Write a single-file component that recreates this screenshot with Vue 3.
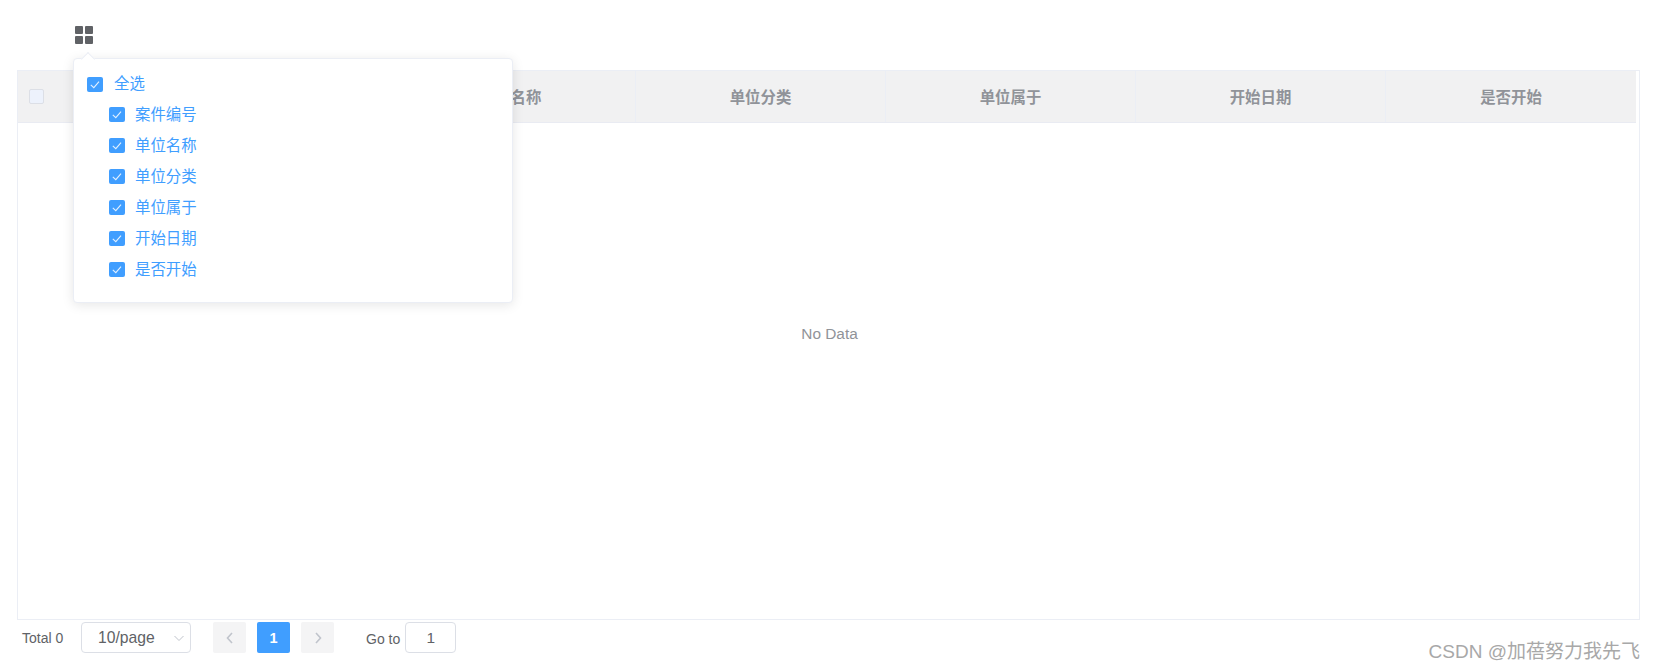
<template>
  <div class="page">
    <div class="toolbar">
      <button class="grid-btn" type="button" aria-label="columns">
        <svg width="18" height="18" viewBox="0 0 18 18">
          <rect x="0" y="0" width="8" height="8" rx="1" />
          <rect x="10" y="0" width="8" height="8" rx="1" />
          <rect x="0" y="10" width="8" height="8" rx="1" />
          <rect x="10" y="10" width="8" height="8" rx="1" />
        </svg>
      </button>
      <div class="popover">
        <span class="popover__arrow"></span>
        <label class="check check--all">
          <span class="check__box">
            <svg width="16" height="15" viewBox="0 0 16 15"><path d="M3.8 7.8 6.8 10.6 12 4.6" /></svg>
          </span>
          <span class="check__label check__label--all">全选</span>
        </label>
        <label v-for="col in columns" :key="col" class="check check--item">
          <span class="check__box">
            <svg width="16" height="15" viewBox="0 0 16 15"><path d="M3.8 7.8 6.8 10.6 12 4.6" /></svg>
          </span>
          <span class="check__label">{{ col }}</span>
        </label>
      </div>
    </div>

    <div class="table">
      <div class="table__head">
        <div class="table__cell table__cell--select">
          <span class="head-check"></span>
        </div>
        <div v-for="col in columns" :key="col" class="table__cell">{{ col }}</div>
      </div>
      <div class="table__empty">No Data</div>
    </div>

    <div class="pager">
      <span class="pager__total">Total 0</span>
      <div class="pager__size">
        <span>10/page</span>
        <svg width="12" height="12" viewBox="0 0 12 12"><path d="M1.5 4 6 8.5 10.5 4" /></svg>
      </div>
      <button class="pager__btn" type="button" aria-label="prev">
        <svg width="12" height="12" viewBox="0 0 12 12"><path d="M8 1 3.5 6 8 11" /></svg>
      </button>
      <button class="pager__btn pager__btn--active" type="button">1</button>
      <button class="pager__btn" type="button" aria-label="next">
        <svg width="12" height="12" viewBox="0 0 12 12"><path d="M4 1 8.5 6 4 11" /></svg>
      </button>
      <span class="pager__goto">Go to</span>
      <div class="pager__input">1</div>
    </div>

    <div class="watermark">CSDN @加蓓努力我先飞</div>
  </div>
</template>

<script setup>
const columns = ["案件编号", "单位名称", "单位分类", "单位属于", "开始日期", "是否开始"];
</script>

<style>
html,
body {
  margin: 0;
  background: #fff;
}
</style>

<style scoped>
.page {
  position: relative;
  height: 670px;
  box-sizing: border-box;
  padding: 0 16px 0 17px;
  font-family: "Liberation Sans", "Noto Sans CJK SC", sans-serif;
  overflow: hidden;
}
.toolbar {
  position: relative;
  height: 70px;
}
.grid-btn {
  display: block;
  margin: 0;
  padding: 26px 0 0 58px;
  border: 0;
  background: none;
}
.grid-btn svg {
  display: block;
  fill: #606266;
}
.popover {
  position: absolute;
  z-index: 2;
  left: 56px;
  top: 58px;
  width: 440px;
  height: 245px;
  box-sizing: border-box;
  padding: 2px 13px;
  background: #fff;
  border: 1px solid #ebeef5;
  border-radius: 4px;
  box-shadow: 0 2px 12px rgba(0, 0, 0, 0.1);
}
.popover__arrow {
  position: absolute;
  left: 9px;
  top: -5px;
  width: 9px;
  height: 9px;
  background: #fff;
  border-left: 1px solid #ebeef5;
  border-top: 1px solid #ebeef5;
  transform: rotate(45deg);
}
.check {
  display: flex;
  align-items: center;
  height: 31px;
}
.check--all {
  margin-top: 8px;
  height: 30px;
}
.check--item {
  padding-left: 22px;
}
.check__box {
  width: 16px;
  height: 15px;
  border-radius: 2px;
  background: #409eff;
  flex: none;
}
.check__box svg {
  display: block;
  fill: none;
  stroke: rgba(255, 255, 255, 0.85);
  stroke-width: 1.1;
}
.check__label {
  margin-left: 10px;
  font-size: 15.4px;
  line-height: 1;
  color: #409eff;
}
.check__label--all {
  margin-left: 11px;
}
.table {
  height: 550px;
  box-sizing: border-box;
  display: flex;
  flex-direction: column;
  border: 1px solid #ebeef5;
  padding-right: 3px;
}
.table__head {
  display: grid;
  grid-template-columns: 118px repeat(6, 1fr);
  height: 52px;
  background: #f1f1f2;
  border-bottom: 1px solid #e9ebf2;
  box-sizing: border-box;
}
.table__cell {
  display: flex;
  align-items: center;
  justify-content: center;
  padding-bottom: 2px;
  font-size: 15.4px;
  font-weight: 700;
  color: #909399;
  border-right: 1px solid #ebeef5;
}
.table__cell:last-child {
  border-right: 0;
}
.table__cell--select {
  justify-content: flex-start;
  padding-left: 11px;
  padding-bottom: 0;
}
.head-check {
  width: 15px;
  height: 15px;
  box-sizing: border-box;
  border: 1px solid #dcdfe6;
  border-radius: 2px;
  background: #edf2fc;
}
.table__empty {
  flex: 1;
  display: flex;
  align-items: center;
  justify-content: center;
  margin-right: -5px;
  padding-bottom: 75px;
  font-size: 15.4px;
  color: #909399;
}
.pager {
  display: flex;
  align-items: center;
  height: 31px;
  margin-top: 2px;
  padding-left: 5px;
  color: #606266;
}
.pager__total {
  width: 59px;
  font-size: 14px;
}
.pager__size {
  display: flex;
  align-items: center;
  justify-content: space-between;
  width: 110px;
  height: 31px;
  box-sizing: border-box;
  padding: 0 5px 0 16px;
  margin-right: 22px;
  border: 1px solid #dcdfe6;
  border-radius: 4px;
  font-size: 15.7px;
}
.pager__size svg {
  fill: none;
  stroke: #c0c4cc;
  stroke-width: 1;
}
.pager__btn {
  display: flex;
  align-items: center;
  justify-content: center;
  width: 33px;
  height: 31px;
  margin: 0 11px 0 0;
  padding: 0;
  border: 0;
  border-radius: 2px;
  background: #f4f4f5;
  font: 700 14.5px "Liberation Sans", sans-serif;
  color: #fff;
}
.pager__btn svg {
  fill: none;
  stroke: #c0c4cc;
  stroke-width: 1.6;
}
.pager__btn--active {
  background: #409eff;
}
.pager__goto {
  margin-left: 21px;
  font-size: 14px;
  padding-top: 2px;
}
.pager__input {
  display: flex;
  align-items: center;
  justify-content: center;
  width: 51px;
  height: 31px;
  box-sizing: border-box;
  margin-left: 5px;
  border: 1px solid #dcdfe6;
  border-radius: 4px;
  font-size: 15.4px;
}
.watermark {
  position: absolute;
  right: 16px;
  top: 640px;
  font-size: 19px;
  line-height: 24px;
  color: #a8a8a8;
  white-space: nowrap;
}
</style>
